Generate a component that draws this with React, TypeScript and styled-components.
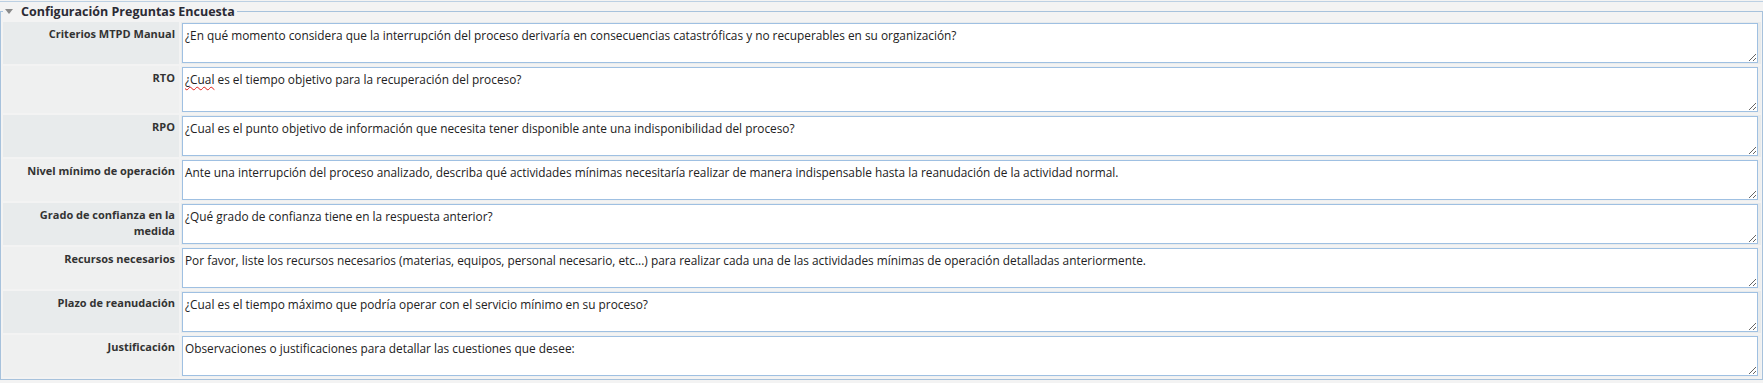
import { createGlobalStyle } from 'styled-components';
import styled from 'styled-components';

const GlobalStyle = createGlobalStyle`
  html, body {
    margin: 0;
    padding: 0;
    background: #f3f3f3;
  }
  body {
    font-family: 'Open Sans', 'Liberation Sans', sans-serif;
    color: #222;
  }
`;

const TopRule = styled.div`
  height: 1px;
  border-bottom: 1px solid #bcd0e3;
`;

const Section = styled.fieldset`
  margin: 0;
  padding: 0 1px 2px 2px;
  border: 1px solid #a7c2dc;
  min-width: 0;
`;

const Legend = styled.legend`
  display: flex;
  align-items: center;
  gap: 8px;
  padding: 0 2px;
  margin-left: 0;
  font-size: 12.5px;
  font-weight: 700;
  line-height: 19px;
  color: #2b2b35;
`;

const Caret = styled.svg`
  width: 8px;
  height: 5px;
  display: block;
`;

const Grid = styled.div`
  display: grid;
  grid-template-columns: 176px 1fr;
  gap: 2px;
  padding-top: 1px;
`;

const LabelCell = styled.div<{ $alt: boolean }>`
  background: ${p => (p.$alt ? '#eff0f0' : '#e8ebec')};
  text-align: right;
  padding: 4px 4px 0 6px;
  font-size: 11px;
  font-weight: 700;
  line-height: 16px;
  color: #333;
`;

const FieldCell = styled.div<{ $alt: boolean }>`
  background: ${p => (p.$alt ? '#eff0f0' : '#e8ebec')};
  padding: 1px 3px 1px 1px;
  display: flex;
  position: relative;
`;

const Question = styled.textarea<{ $tall?: boolean }>`
  box-sizing: border-box;
  width: 100%;
  height: ${p => (p.$tall ? '45px' : '40px')};
  margin: 0;
  padding: 3px 2px;
  border: 1px solid #9fc0e2;
  border-radius: 0;
  background: #fff;
  font-family: 'Open Sans', 'Liberation Sans', sans-serif;
  font-size: 11.85px;
  line-height: 16px;
  color: #222;
  outline: none;
`;

const Squiggle = styled.span`
  position: absolute;
  left: 4px;
  top: 5px;
  font-family: 'Open Sans', 'Liberation Sans', sans-serif;
  font-size: 11.85px;
  line-height: 16px;
  color: transparent;
  text-decoration: underline wavy #e0201b;
  text-decoration-thickness: 1px;
  text-underline-offset: 2px;
  pointer-events: none;
`;

const rows = [
  {
    label: 'Criterios MTPD Manual',
    text: '¿En qué momento considera que la interrupción del proceso derivaría en consecuencias catastróficas y no recuperables en su organización?',
  },
  { label: 'RTO', text: '¿Cual es el tiempo objetivo para la recuperación del proceso?', tall: true, squiggle: '¿Cual' },
  {
    label: 'RPO',
    text: '¿Cual es el punto objetivo de información que necesita tener disponible ante una indisponibilidad del proceso?',
  },
  {
    label: 'Nivel mínimo de operación',
    text: 'Ante una interrupción del proceso analizado, describa qué actividades mínimas necesitaría realizar de manera indispensable hasta la reanudación de la actividad normal.',
  },
  { label: 'Grado de confianza en la medida', text: '¿Qué grado de confianza tiene en la respuesta anterior?' },
  {
    label: 'Recursos necesarios',
    text: 'Por favor, liste los recursos necesarios (materias, equipos, personal necesario, etc...) para realizar cada una de las actividades mínimas de operación detalladas anteriormente.',
  },
  {
    label: 'Plazo de reanudación',
    text: '¿Cual es el tiempo máximo que podría operar con el servicio mínimo en su proceso?',
  },
  { label: 'Justificación', text: 'Observaciones o justificaciones para detallar las cuestiones que desee:' },
];

export default function App() {
  return (
    <>
      <GlobalStyle />
      <TopRule />
      <Section>
        <Legend>
          <Caret viewBox="0 0 8 5">
            <path d="M0 0 L8 0 L4 5 Z" fill="#8a8a8a" />
          </Caret>
          Configuración Preguntas Encuesta
        </Legend>
        <Grid>
          {rows.map((r, i) => (
            <>
              <LabelCell key={`l${i}`} $alt={i % 2 === 1}>
                {r.label}
              </LabelCell>
              <FieldCell key={`f${i}`} $alt={i % 2 === 1}>
                <Question $tall={r.tall} defaultValue={r.text} spellCheck={false} />
                {r.squiggle && <Squiggle>{r.squiggle}</Squiggle>}
              </FieldCell>
            </>
          ))}
        </Grid>
      </Section>
    </>
  );
}
